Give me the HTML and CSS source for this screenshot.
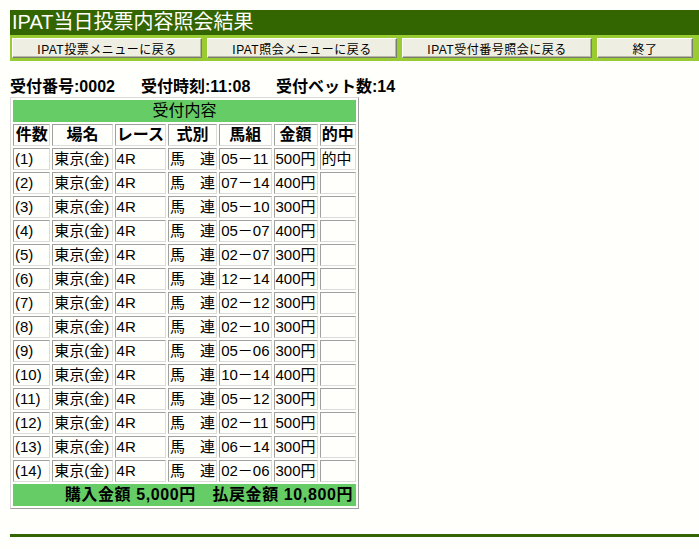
FILE: index.html
```html
<!DOCTYPE html>
<html lang="ja">

<head>
    <meta charset="UTF-8">
    <title>IPAT当日投票内容照会結果</title>
    <link rel="stylesheet" href="styles.css">
</head>

<body>

    <div class="title-bar">IPAT当日投票内容照会結果</div>
    <div class="menu-bar">
        <button type="button" class="menu-btn">IPAT投票メニューに戻る</button>
        <button type="button" class="menu-btn">IPAT照会メニューに戻る</button>
        <button type="button" class="menu-btn">IPAT受付番号照会に戻る</button>
        <button type="button" class="menu-btn small">終了</button>
    </div>

    <div class="info">
        <span class="info-item no">受付番号:0002</span>
        <span class="info-item time">受付時刻:11:08</span>
        <span class="info-item">受付ベット数:14</span>
    </div>

    <table class="result">
        <tr>
            <th colspan="7" class="caption">受付内容</th>
        </tr>
        <tr>
            <th class="c-no">件数</th>
            <th class="c-place">場名</th>
            <th class="c-race">レース</th>
            <th class="c-type">式別</th>
            <th class="c-combo">馬組</th>
            <th class="c-amount">金額</th>
            <th class="c-hit">的中</th>
        </tr>
        <tr><td>(1)</td><td>東京(金)</td><td>4R</td><td>馬　連</td><td>05－11</td><td>500円</td><td>的中</td></tr>
        <tr><td>(2)</td><td>東京(金)</td><td>4R</td><td>馬　連</td><td>07－14</td><td>400円</td><td></td></tr>
        <tr><td>(3)</td><td>東京(金)</td><td>4R</td><td>馬　連</td><td>05－10</td><td>300円</td><td></td></tr>
        <tr><td>(4)</td><td>東京(金)</td><td>4R</td><td>馬　連</td><td>05－07</td><td>400円</td><td></td></tr>
        <tr><td>(5)</td><td>東京(金)</td><td>4R</td><td>馬　連</td><td>02－07</td><td>300円</td><td></td></tr>
        <tr><td>(6)</td><td>東京(金)</td><td>4R</td><td>馬　連</td><td>12－14</td><td>400円</td><td></td></tr>
        <tr><td>(7)</td><td>東京(金)</td><td>4R</td><td>馬　連</td><td>02－12</td><td>300円</td><td></td></tr>
        <tr><td>(8)</td><td>東京(金)</td><td>4R</td><td>馬　連</td><td>02－10</td><td>300円</td><td></td></tr>
        <tr><td>(9)</td><td>東京(金)</td><td>4R</td><td>馬　連</td><td>05－06</td><td>300円</td><td></td></tr>
        <tr><td>(10)</td><td>東京(金)</td><td>4R</td><td>馬　連</td><td>10－14</td><td>400円</td><td></td></tr>
        <tr><td>(11)</td><td>東京(金)</td><td>4R</td><td>馬　連</td><td>05－12</td><td>300円</td><td></td></tr>
        <tr><td>(12)</td><td>東京(金)</td><td>4R</td><td>馬　連</td><td>02－11</td><td>500円</td><td></td></tr>
        <tr><td>(13)</td><td>東京(金)</td><td>4R</td><td>馬　連</td><td>06－14</td><td>300円</td><td></td></tr>
        <tr><td>(14)</td><td>東京(金)</td><td>4R</td><td>馬　連</td><td>02－06</td><td>300円</td><td></td></tr>
        <tr>
            <th colspan="7" class="total">購入金額 5,000円　払戻金額 10,800円</th>
        </tr>
    </table>

    <div class="bottom-line"></div>

</body>

</html>
```

FILE: styles.css
```css
* {
    box-sizing: border-box;
}

body {
    margin: 10px 0 0 10px;
    background-color: #fffffb;
    font-family: "Liberation Sans", "Noto Sans CJK JP", sans-serif;
    font-size: 15px;
    color: #000;
}

.title-bar {
    height: 25px;
    line-height: 25px;
    padding-left: 2px;
    background-color: #336600;
    color: #fff;
    font-size: 20px;
}

.menu-bar {
    height: 26px;
    padding: 3px 2px;
    background-color: #99cc33;
    display: flex;
    gap: 5px;
}

.menu-btn {
    width: 190px;
    height: 20px;
    padding: 0;
    font-family: "Liberation Sans", "Noto Sans CJK JP", sans-serif;
    font-size: 12px;
    letter-spacing: 0.5px;
    background-color: #efeee2;
    border: 1px solid;
    border-color: #fff #7a7a70 #7a7a70 #fff;
    box-shadow: inset -1px -1px 0 #b8b8a8;
    color: #000;
}

.menu-btn.small {
    width: 96px;
}

.info {
    margin-top: 16px;
    height: 20px;
    line-height: 20px;
    font-size: 16px;
    font-weight: bold;
    display: flex;
}

.info-item.no {
    width: 131px;
}

.info-item.time {
    width: 135px;
}

.result {
    border-collapse: separate;
    border-spacing: 2px;
    border: 1px solid;
    border-color: #d8d8d8 #a0a0a0 #a0a0a0 #d8d8d8;
    width: 349px;
}

.result th,
.result td {
    height: 22px;
    padding: 0 1px;
    line-height: 20px;
    border: 1px solid;
    border-color: #a0a0a0 #dcdcdc #dcdcdc #a0a0a0;
    white-space: nowrap;
    text-align: left;
}

.result th {
    text-align: center;
    font-size: 16px;
}

.result th.caption {
    height: 21px;
    font-weight: normal;
    background-color: #66cc66;
    border-color: #66cc66;
}

.result th.total {
    text-align: right;
    padding-right: 2px;
    letter-spacing: 0.6px;
    background-color: #66cc66;
    border-color: #66cc66;
}

.c-no { width: 39px; }
.c-place { width: 62px; }
.c-race { width: 52px; }
.c-type { width: 48px; }
.c-combo { width: 50px; }
.c-amount { width: 44px; }
.c-hit { width: 37px; }

.bottom-line {
    margin-top: 25px;
    height: 3px;
    background-color: #336600;
}
```
